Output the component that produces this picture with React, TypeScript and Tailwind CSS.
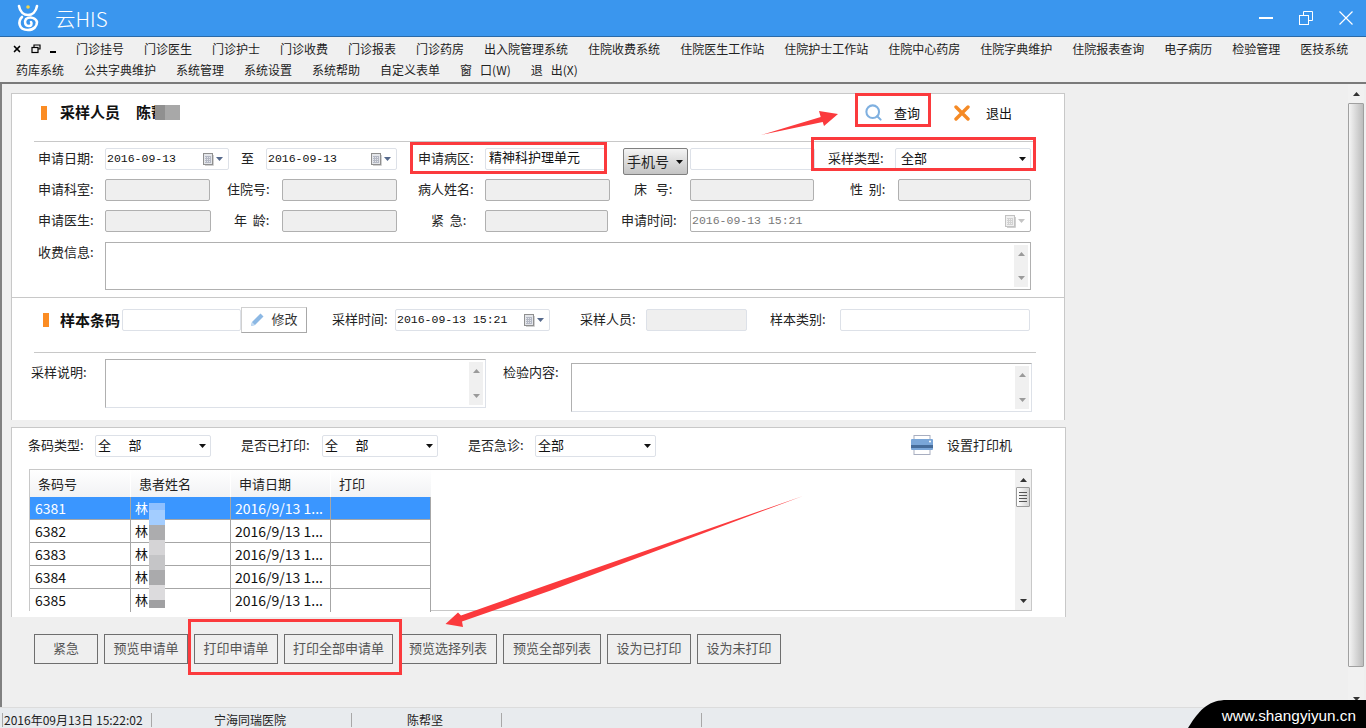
import type { ReactNode } from "react";
import { Search, X } from "lucide-react";

const CJK = "font-['Noto_Sans_CJK_SC','Noto_Sans',sans-serif]";

const menuRow1 = ["门诊挂号", "门诊医生", "门诊护士", "门诊收费", "门诊报表", "门诊药房", "出入院管理系统", "住院收费系统", "住院医生工作站", "住院护士工作站", "住院中心药房", "住院字典维护", "住院报表查询", "电子病历", "检验管理", "医技系统"];
const menuRow2 = ["药库系统", "公共字典维护", "系统管理", "系统设置", "系统帮助", "自定义表单"];
const actions = ["紧急", "预览申请单", "打印申请单", "打印全部申请单", "预览选择列表", "预览全部列表", "设为已打印", "设为未打印"];
const actionWidths = ["w-[64px]", "w-[84px]", "w-[84px]", "w-[109px]", "w-[98px]", "w-[98px]", "w-[84px]", "w-[84px]"];
const rows = ["6381", "6382", "6383", "6384", "6385"];
const blurBlocks = [
  "h-[7px] bg-[#8fc0ff]",
  "h-[15px] bg-[#a3cdff]",
  "h-[15px] bg-[#acacae]",
  "h-[15px] bg-[#d5d4d6]",
  "h-[15px] bg-[#c5c5c7]",
  "h-[15px] bg-[#aaaaac]",
  "h-[15px] bg-[#dcdbdd]",
  "h-[8px] bg-[#a0a0a2]",
];

function Logo() {
  return (
    <svg width="24" height="28" viewBox="0 0 24 28" fill="none" stroke="#fff" strokeWidth="2.6" strokeLinecap="round">
      <path d="M3 2 C4 8 8 11 12 11 C16 11 20 8 21 2" />
      <circle cx="12" cy="3" r="1.8" fill="#f5d547" stroke="none" />
      <path d="M6 13 C2 17 2 26 12 26 C18 26 21 22 21 18 C20 14 14 12 10 15 C8 18 9 22 13 22 C15 22 16.500 20 15 18" />
    </svg>
  );
}

function Calendar({ muted }: { muted?: boolean }) {
  return (
    <span className="flex shrink-0 items-center gap-[2px]">
      <svg width="11" height="13" viewBox="0 0 11 13">
        <rect x="0.500" y="0.500" width="9" height="11" fill={muted ? "#f0f0f0" : "#e4e6ea"} stroke={muted ? "#c2c2c2" : "#8f8f8f"} />
        <path d="M2 3.500h6M2 5.500h6M2 7.500h6M2 9.500h6M3.500 3v7M5.500 3v7M7.500 3v7" stroke={muted ? "#d2d2d2" : "#b4b8c4"} strokeWidth="1" />
        <path d="M10.500 2v10.500H2" stroke="#d0d0d0" fill="none" />
      </svg>
      <svg width="7" height="4" viewBox="0 0 7 4">
        <path d="M0 0h7L3.500 4z" fill={muted ? "#c4c4c4" : "#55698c"} />
      </svg>
    </span>
  );
}

function Caret({ className }: { className?: string }) {
  return (
    <svg width="7" height="4" viewBox="0 0 7 4" className={className}>
      <path d="M0 0h7L3.500 4z" fill="#111" />
    </svg>
  );
}

function Label({ className, children }: { className: string; children: ReactNode }) {
  return <span className={`shrink-0 whitespace-pre text-[13px] leading-[20px] text-[#222] ${className}`}>{children}</span>;
}

function Disabled({ className }: { className: string }) {
  return <div className={`h-[22px] shrink-0 rounded-[2px] border border-[#b0b0b0] bg-[#efefef] ${className}`} />;
}

function Plain({ className, children }: { className: string; children?: ReactNode }) {
  return <div className={`h-[22px] shrink-0 rounded-[2px] border border-[#dde1e8] bg-white pl-[3px] text-[13px] leading-[16px] text-[#111] ${className}`}>{children}</div>;
}

function DateBox({ className, value, muted }: { className: string; value: string; muted?: boolean }) {
  return (
    <div className={`flex h-[22px] shrink-0 items-center justify-between rounded-[2px] border pl-[1px] pr-[5px] ${muted ? "border-[#b0b0b0] text-[#777]" : "border-[#dde1e8] text-[#111]"} ${className}`}>
      <span className="whitespace-pre font-['Liberation_Mono',monospace] text-[11.500px]">{value}</span>
      <Calendar muted={muted} />
    </div>
  );
}

function SelectBox({ className, value }: { className: string; value: string }) {
  return (
    <div className={`flex h-[22px] shrink-0 items-center justify-between rounded-[2px] border border-[#dde1e8] bg-white pl-[2px] pr-[4px] text-[13px] text-[#111] ${className}`}>
      <span className="-mt-[3px] whitespace-pre">{value}</span>
      <Caret />
    </div>
  );
}

function TextBox({ className, light }: { className: string; light?: boolean }) {
  return (
    <div className={`flex shrink-0 justify-end border border-[#b0b0b0] bg-white p-[2px] ${light ? "border-b-[#dde1e8] border-r-[#dde1e8]" : ""} ${className}`}>
      <div className="flex w-[14px] flex-col items-center justify-between bg-[#f0f0f0] py-[7px]">
        <svg width="7" height="4" viewBox="0 0 7 4"><path d="M3.500 0L7 4H0z" fill="#9a9a9a" /></svg>
        <svg width="7" height="4" viewBox="0 0 7 4"><path d="M0 0h7L3.500 4z" fill="#9a9a9a" /></svg>
      </div>
    </div>
  );
}

function OrangeBar({ className }: { className: string }) {
  return <span className={`h-[14px] w-[6px] shrink-0 bg-[#fb8c23] ${className}`} />;
}

function RequestForm() {
  return (
    <>
      <div className="relative flex h-[47px] items-center pb-[10px] pl-[29px]">
        <OrangeBar className="mt-[1px]" />
        <b className="ml-[13px] text-[15px] text-[#111]">采样人员</b>
        <b className="ml-[16px] text-[15px] text-[#111]">陈帮</b>
        <span className="absolute left-[143px] top-[11px] h-[15px] w-[10px] bg-[#909090]" />
        <span className="absolute left-[153px] top-[11px] h-[15px] w-[15px] bg-[#a8a8a8]" />
        <div className="ml-auto flex items-center pr-[52px] text-[13px] text-[#111]">
          <Search size={19} strokeWidth={2.6} className="text-[#7fb0e0]" />
          <span className="ml-[11px]">查询</span>
          <svg width="16" height="16" viewBox="0 0 16 16" className="ml-[34px]">
            <path d="M2 2l12 12M14 2L2 14" stroke="#f58a25" strokeWidth="3.400" strokeLinecap="round" />
          </svg>
          <span className="ml-[16px]">退出</span>
        </div>
      </div>
      <div className="ml-[22px] mr-[29px] h-px bg-[#c8c8c8]" />
      <div className="mt-[6px] flex flex-col gap-[9px] pl-[26px]">
        <div className="flex h-[22px] items-start">
          <Label className="w-[67px]">申请日期:</Label>
          <DateBox className="w-[124px]" value="2016-09-13" />
          <Label className="ml-[12px] w-[25px]">至</Label>
          <DateBox className="w-[131px]" value="2016-09-13" />
          <Label className="ml-[21px] w-[67px]">申请病区:</Label>
          <Plain className="w-[121px]">精神科护理单元</Plain>
          <div className="ml-[17px] flex h-[27px] w-[65px] shrink-0 items-center justify-between rounded-[2px] border border-[#808080] bg-gradient-to-b from-[#f4f4f4] to-[#c4c4c4] pl-[3px] pr-[4px] text-[14px] text-[#222]">
            手机号
            <Caret />
          </div>
          <Plain className="ml-[2px] w-[125px]" />
          <Label className="ml-[13px] w-[67px]">采样类型:</Label>
          <SelectBox className="w-[136px]" value=" 全部" />
        </div>
        <div className="flex h-[22px] items-start">
          <Label className="w-[67px]">申请科室:</Label>
          <Disabled className="w-[105px]" />
          <Label className="ml-[17px] w-[55px]">住院号:</Label>
          <Disabled className="w-[115px]" />
          <Label className="ml-[21px] w-[67px]">病人姓名:</Label>
          <Disabled className="w-[125px]" />
          <Label className="ml-[24px] w-[56px]">{"床   号:"}</Label>
          <Disabled className="w-[124px]" />
          <Label className="ml-[36px] w-[48px]">{"性  别:"}</Label>
          <Disabled className="w-[133px]" />
        </div>
        <div className="flex h-[22px] items-start">
          <Label className="w-[67px]">申请医生:</Label>
          <Disabled className="w-[106px]" />
          <Label className="ml-[23px] w-[48px]">{"年  龄:"}</Label>
          <Disabled className="w-[115px]" />
          <Label className="ml-[34px] w-[54px]">{"紧  急:"}</Label>
          <Disabled className="w-[123px]" />
          <Label className="ml-[13px] w-[69px]">申请时间:</Label>
          <DateBox className="w-[341px]" value="2016-09-13 15:21" muted />
        </div>
        <div className="mt-[1px] flex items-start">
          <Label className="w-[67px]">收费信息:</Label>
          <TextBox className="h-[48px] w-[926px]" />
        </div>
      </div>
    </>
  );
}

function SampleForm() {
  return (
    <>
      <div className="mt-[7px] h-px bg-[#c8c8c8]" />
      <div className="flex h-[54px] items-start pl-[31px] pt-[11px]">
        <OrangeBar className="mt-[4px]" />
        <b className="ml-[11px] w-[62px] shrink-0 text-[15px] leading-[21px] text-[#111]">样本条码</b>
        <Plain className="w-[119px]" />
        <div className="-mt-[2px] flex h-[26px] w-[66px] shrink-0 items-center justify-center gap-[6px] border border-[#d0d0d0] border-b-[#a8a8a8] border-r-[#a8a8a8] bg-white pb-[2px] text-[13px] text-[#333]">
          <svg width="15" height="15" viewBox="0 0 15 15">
            <path d="M1 14l1-4L10.500 1.500l3 3L5 13z" fill="#8cb8e4" />
            <path d="M1 14l1-4 3 3z" fill="#c5dcf2" />
          </svg>
          修改
        </div>
        <Label className="ml-[25px] w-[63px]">采样时间:</Label>
        <DateBox className="w-[155px]" value="2016-09-13 15:21" />
        <Label className="ml-[30px] w-[66px]">采样人员:</Label>
        <div className="h-[22px] w-[101px] shrink-0 rounded-[2px] border border-[#dde1e8] bg-[#efefef]" />
        <Label className="ml-[23px] w-[70px]">样本类别:</Label>
        <Plain className="w-[190px]" />
      </div>
      <div className="ml-[22px] mr-[28px] h-px bg-[#c8c8c8]" />
      <div className="flex items-start pl-[19px] pt-[6px]">
        <Label className="mt-[3px] w-[74px]">采样说明:</Label>
        <TextBox light className="h-[49px] w-[381px]" />
        <Label className="ml-[17px] mt-[3px] w-[68px]">检验内容:</Label>
        <TextBox light className="mt-[4px] h-[49px] w-[461px]" />
      </div>
    </>
  );
}

function PatientGrid() {
  return (
    <div className="relative mt-[12px] ml-[17px] flex h-[142px] w-[1003px] justify-between border border-[#c8c8c8]">
      <div className="w-[401px]">
        <div className="flex h-[27px] bg-gradient-to-b from-white to-[#f1f2f4] text-[13px] leading-[27px] text-[#222]">
          <span className="w-[101px] border-r border-white pl-[8px]">条码号</span>
          <span className="w-[100px] border-r border-white pl-[8px]">患者姓名</span>
          <span className="w-[100px] border-r border-white pl-[8px]">申请日期</span>
          <span className="w-[100px] pl-[8px]">打印</span>
        </div>
        {rows.map((id, i) => (
          <div key={id} className={`flex h-[23px] border-b border-[#a6a6a6] text-[14px] leading-[22px] ${i === 0 ? "bg-[#3a96ff] text-white" : "bg-white text-[#111]"} ${i === 4 ? "border-b-0" : ""}`}>
            <span className="w-[101px] border-r border-[#a6a6a6] pl-[5px]">{id}</span>
            <span className="w-[100px] border-r border-[#a6a6a6] pl-[4px] text-[13px]">林</span>
            <span className="w-[100px] border-r border-[#a6a6a6] pl-[4px]">2016/9/13 1...</span>
            <span className="w-[100px] border-r border-[#a6a6a6]" />
          </div>
        ))}
      </div>
      <div className="absolute left-[119px] top-[33px] flex w-[16px] flex-col">
        {blurBlocks.map((c) => <span key={c} className={c} />)}
      </div>
      <div className="flex w-[16px] flex-col items-center bg-[#f0f0f0] pt-[8px]">
        <svg width="7" height="4" viewBox="0 0 7 4"><path d="M3.500 0L7 4H0z" fill="#333" /></svg>
        <div className="mt-[5px] flex h-[20px] w-[14px] flex-col items-center justify-center gap-[2px] rounded-[1px] border border-[#9a9a9a] bg-gradient-to-r from-white to-[#d4d4d4]">
          <span className="h-px w-[8px] bg-[#555]" />
          <span className="h-px w-[8px] bg-[#555]" />
          <span className="h-px w-[8px] bg-[#555]" />
          <span className="h-px w-[8px] bg-[#555]" />
        </div>
        <svg width="7" height="4" viewBox="0 0 7 4" className="mt-auto mb-[7px]"><path d="M0 0h7L3.500 4z" fill="#333" /></svg>
      </div>
    </div>
  );
}

function ListPanel() {
  return (
    <div className="mt-[7px] h-[190px] w-[1055px] border-r border-t border-l border-[#c8c8c8] bg-white pt-[7px]">
      <div className="flex h-[22px] items-start pl-[16px]">
        <Label className="w-[67px]">条码类型:</Label>
        <SelectBox className="w-[116px]" value="全      部" />
        <Label className="ml-[30px] w-[81px]">是否已打印:</Label>
        <SelectBox className="w-[116px]" value="全      部" />
        <Label className="ml-[30px] w-[67px]">是否急诊:</Label>
        <SelectBox className="w-[121px]" value="全部" />
        <svg width="22" height="20" viewBox="0 0 22 20" className="ml-[255px] shrink-0">
          <rect x="3" y="0.500" width="16" height="5" fill="#fff" stroke="#a8aec0" />
          <rect x="3" y="12.500" width="16" height="7" fill="#fff" stroke="#a8aec0" />
          <rect x="0" y="4" width="22" height="11" rx="1" fill="#7aa6d8" />
          <rect x="0" y="10" width="22" height="3" fill="#466c9a" />
          <circle cx="19" cy="6.500" r="1" fill="#fff" />
        </svg>
        <Label className="ml-[14px]">设置打印机</Label>
      </div>
      <PatientGrid />
    </div>
  );
}

function Annotations() {
  return (
    <>
      <div className="absolute left-[855px] top-[93px] h-[34px] w-[76px] border-[3px] border-[#fb3a3d]" />
      <div className="absolute left-[410px] top-[142px] h-[32px] w-[197px] border-[3px] border-[#fb3a3d]" />
      <div className="absolute left-[811px] top-[137px] h-[34px] w-[225px] border-[3px] border-[#fb3a3d]" />
      <div className="absolute left-[188px] top-[619px] h-[56px] w-[214px] border-[3px] border-[#fb3a3d]" />
      <svg width="1366" height="728" className="pointer-events-none absolute left-0 top-0">
        <path d="M761 135L820.700 117L819 111L838 114L824 126L822.700 122z" fill="#fb3a3d" />
        <path d="M803 496L550 584L461 615.500L458 612.500L445.500 624L463 627L462 621.500L550 590.700z" fill="#fb3a3d" />
      </svg>
    </>
  );
}

export default function App() {
  return (
    <div className={`relative flex h-[728px] w-[1366px] flex-col overflow-hidden bg-[#efefef] ${CJK}`}>
      <header className="flex h-[37px] shrink-0 items-center border-b border-[#2a6aa8] bg-[#3a96ee] pl-[16px] pr-[13px] text-white">
        <Logo />
        <span className="ml-[15px] text-[20.500px] font-light">云HIS</span>
        <span className="ml-auto h-[2px] w-[14px] bg-white" />
        <svg width="14" height="14" viewBox="0 0 14 14" fill="none" stroke="#fff" strokeWidth="1" className="ml-[26px]">
          <path d="M4.500 4V0.500h9v9H10" />
          <rect x="0.500" y="4.500" width="9" height="9" />
        </svg>
        <svg width="14" height="14" viewBox="0 0 14 14" stroke="#fff" strokeWidth="1.200" className="ml-[26px]">
          <path d="M0.500 0.500l13 13M13.500 0.500l-13 13" />
        </svg>
      </header>

      <nav className="flex h-[47px] shrink-0 flex-col border-b-2 border-[#7a7a7a] bg-[#f0f0f0] text-[12px] leading-[21px] text-[#222]">
        <div className="flex items-center gap-5 pl-[12px] pt-[1px]">
          <div className="flex w-[44px] shrink-0 items-center justify-between text-black">
            <X size={10} strokeWidth={4} />
            <svg width="10" height="10" viewBox="0 0 10 10" fill="none" stroke="#000" strokeWidth="1.200"><path d="M3 3V1h6v4H7" /><rect x="1" y="3.500" width="6" height="5" /></svg>
            <span className="mt-[6px] h-[2px] w-[6px] bg-black" />
          </div>
          {menuRow1.map((m) => <span key={m} className="shrink-0">{m}</span>)}
        </div>
        <div className="flex gap-5 pl-[16px]">
          {menuRow2.map((m) => <span key={m} className="shrink-0">{m}</span>)}
          <span>窗<span className="ml-[8px]">口(W)</span></span>
          <span>退<span className="ml-[8px]">出(X)</span></span>
        </div>
      </nav>

      <main className="flex min-h-0 flex-1 border-l-2 border-[#808080]">
        <div className="pl-[9px] pt-[9px]">
          <div className="h-[327px] w-[1054px] border-l border-r border-t border-[#c8c8c8] bg-white">
            <RequestForm />
            <SampleForm />
          </div>
          <ListPanel />
          <div className="mt-[17px] flex gap-[6px] pl-[23px]">
            {actions.map((a, i) => (
              <div key={a} className={`flex h-[30px] items-center justify-center border border-[#6e6e6e] pb-[2px] text-[13px] text-[#555] ${actionWidths[i]}`}>{a}</div>
            ))}
          </div>
        </div>
        <div className="ml-auto mr-[2px] flex w-[16px] flex-col items-center bg-[#f1f1f1] pt-[8px]">
          <svg width="7" height="4" viewBox="0 0 7 4"><path d="M3.500 0L7 4H0z" fill="#333" /></svg>
          <div className="mt-[7px] h-[564px] w-[16px] shrink-0 rounded-[1px] border border-[#a0a0a0] bg-gradient-to-r from-[#f4f4f4] to-[#bcbcbc]" />
          <svg width="7" height="4" viewBox="0 0 7 4" className="mt-[30px]"><path d="M0 0h7L3.500 4z" fill="#333" /></svg>
        </div>
      </main>

      <footer className="flex h-[21px] shrink-0 items-center border-t border-[#dcdcdc] bg-[#e8ebee] pl-[2px] pt-[3px] text-[12px] leading-[14px] text-[#222]">
        <span className="w-[149px] border-l border-[#a8a8a8] pl-[1px] whitespace-nowrap">2016年09月13日 15:22:02</span>
        <span className="w-[200px] border-l border-[#a8a8a8] pl-[62px]">宁海同瑞医院</span>
        <span className="w-[150px] border-l border-[#a8a8a8] pl-[55px]">陈帮坚</span>
        <span className="h-[14px] w-[200px] border-l border-[#a8a8a8]" />
        <span className="h-[14px] border-l border-[#a8a8a8]" />
      </footer>

      <Annotations />
      <div className="absolute bottom-0 right-0 h-[28px] w-[178px]">
        <svg width="178" height="28" viewBox="0 0 178 28" className="absolute inset-0">
          <path d="M0 28C12 8 22 0 39 0H178V28z" fill="#000" />
        </svg>
        <span className="absolute right-[10px] top-[7px] font-['Liberation_Sans',sans-serif] text-[15.300px] leading-[18px] text-white">www.shangyiyun.cn</span>
      </div>
    </div>
  );
}
